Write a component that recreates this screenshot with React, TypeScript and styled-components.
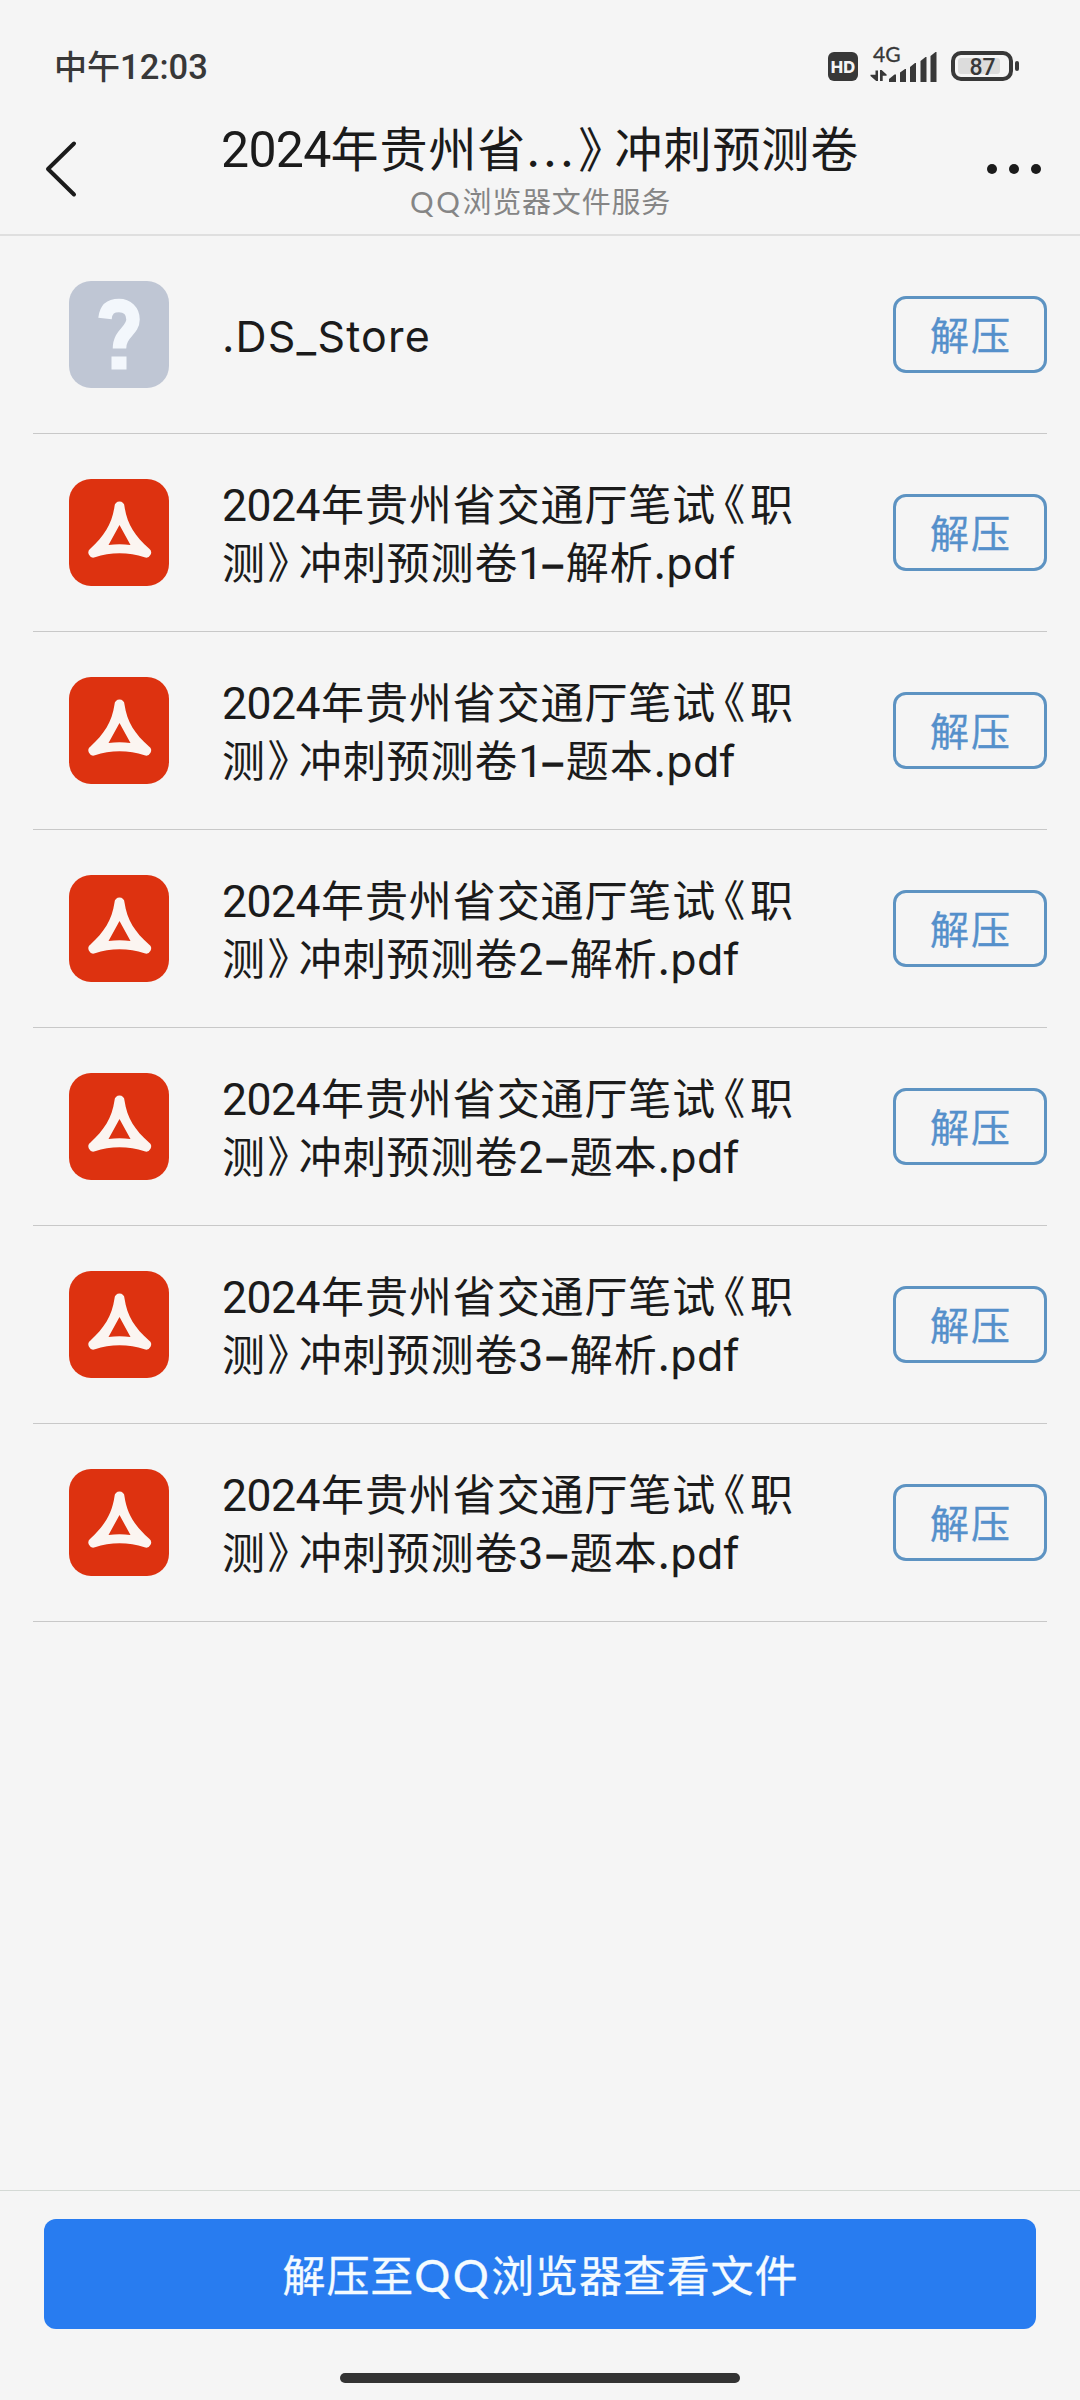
import React from "react";
import styled, { createGlobalStyle, css } from "styled-components";

const GlobalStyle = createGlobalStyle`
  html, body { margin: 0; padding: 0; background: #f5f5f5; }
  * { box-sizing: border-box; }
`;

const cjk = `"Noto Sans CJK SC", sans-serif`;

const Screen = styled.div`
  width: 1080px;
  height: 2400px;
  display: flex;
  flex-direction: column;
  background: #f5f5f5;
  color: #1b1b1b;
  font-family: ${cjk};
  overflow: hidden;
`;

const Run = styled.span<{ $face?: string; $size?: number; $gap?: number; $before?: number; $after?: number }>`
  line-height: 1;
  ${(p) => p.$face && css`font-family: ${p.$face}, ${cjk};`}
  ${(p) => p.$size && css`font-size: ${p.$size}px;`}
  ${(p) => p.$gap !== undefined && css`letter-spacing: ${p.$gap}px;`}
  margin-left: ${(p) => p.$before ?? 0}px;
  margin-right: ${(p) => p.$after ?? 0}px;
`;

/* Book-title brackets set at half width */
const Bracket = styled(Run)`
  font-feature-settings: "halt" 1;
`;

const Dash = styled(Run)`
  -webkit-text-stroke: 1.6px currentColor;
`;

const StatusBar = styled.div`
  height: 108px;
  padding: 0 61px 0 54px;
  display: flex;
  justify-content: space-between;
  flex: none;
`;

const Clock = styled.div`
  font-size: 33px;
  line-height: 48px;
  margin-top: 41px;
  font-weight: 500;
  letter-spacing: 0px;
  color: #383838;
  white-space: nowrap;
`;

const Header = styled.header`
  height: 128px;
  flex: none;
  display: flex;
  justify-content: space-between;
  border-bottom: 2px solid #dfdfdf;
`;

const Titles = styled.div`
  width: 640px;
  display: flex;
  flex-direction: column;
  white-space: nowrap;
`;

const Title = styled.h1`
  margin: 2px 0 0 1px;
  font-size: 48px;
  line-height: 72px;
  font-weight: 400;
  letter-spacing: 0.9px;
`;

const Subtitle = styled.div`
  margin-left: 190px;
  font-size: 29px;
  line-height: 36px;
  letter-spacing: 0.8px;
  color: #858585;
`;

const List = styled.ul`
  margin: 0;
  padding: 0 33px;
  list-style: none;
  flex: 1;
`;

const Row = styled.li`
  height: 198px;
  display: flex;
  align-items: center;
  border-bottom: 1px solid #c8c8c8;
`;

const Name = styled.div`
  flex: 1;
  margin-left: 53px;
  padding-bottom: 4px;
  font-size: 43px;
  line-height: 58px;
  letter-spacing: 0.9px;
  white-space: nowrap;
`;

const ExtractButton = styled.button`
  width: 154px;
  height: 77px;
  padding: 0 0 3px 2px;
  border: 3px solid #5d93c2;
  border-radius: 13px;
  background: transparent;
  color: #5590cb;
  font: 400 39px/60px ${cjk};
  letter-spacing: 2px;
  -webkit-text-stroke: 0.3px currentColor;
`;

const Footer = styled.footer`
  height: 210px;
  flex: none;
  display: flex;
  flex-direction: column;
  align-items: center;
  border-top: 1px solid #d4d9d5;
`;

const PrimaryButton = styled.button`
  width: 992px;
  height: 110px;
  margin-top: 28px;
  padding: 0 0 2px 1px;
  border: 0;
  border-radius: 12px;
  background: #287cf0;
  color: #f4fbff;
  font: 400 43px/64px ${cjk};
  letter-spacing: 0.9px;
  white-space: nowrap;
  -webkit-text-stroke: 0.3px currentColor;
`;

const HomeBar = styled.div`
  width: 400px;
  height: 10px;
  margin-top: 44px;
  border-radius: 5px;
  background: #333;
`;

const IconBox = styled.svg`
  display: block;
  flex: none;
`;

const FileIcon = styled(IconBox)`
  margin-left: 36px;
`;

function StatusIcons() {
  return (
    <IconBox width="200" height="108" viewBox="819 0 200 108">
      <rect x="828" y="52" width="30" height="29" rx="6" fill="#383838" />
      <text x="843" y="72.500" textAnchor="middle" fontFamily="Inter" fontWeight="800" fontSize="16.500" fill="#f5f5f5">HD</text>
      <text x="873" y="62" fontFamily="Lato" fontSize="21" fill="#383838" stroke="#383838" strokeWidth="0.3">4G</text>
      <g fill="#383838">
        <path d="M875.5 70.5h2.500V81h-1.800L870.500 76v-1.200h5zM880 70h1.600l5 4.600v1.200h-3.900V81H880z" />
        <path d="M889 82v-3l5.500-4.500H896V82h-7z" />
        <path d="M900 82v-9.500l5-3.500h1v13zM910 82V67l5-4h1v19zM920.500 82V61l5-4h1v25zM930.500 82V56l5-4h1v30z" />
      </g>
      <rect x="953" y="53" width="58" height="26" rx="8" fill="none" stroke="#383838" strokeWidth="4" />
      <rect x="958" y="58" width="42" height="16" rx="3" fill="#dcdcdc" />
      <text x="982.500" y="74.500" textAnchor="middle" fontFamily="Roboto" fontWeight="500" fontSize="23" fill="#383838">87</text>
      <rect x="1015" y="61" width="4" height="10" rx="2" fill="#383838" />
    </IconBox>
  );
}

function BackIcon() {
  return (
    <IconBox width="120" height="126" viewBox="0 108 120 126">
      <path d="M74 143.500 48 169 74 194.500" fill="none" stroke="#1b1b1b" strokeWidth="4" strokeLinecap="round" strokeLinejoin="round" />
    </IconBox>
  );
}

function MoreIcon() {
  return (
    <IconBox width="120" height="126" viewBox="960 108 120 126">
      <circle cx="992" cy="169" r="5" fill="#1b1b1b" />
      <circle cx="1014" cy="169" r="5" fill="#1b1b1b" />
      <circle cx="1036" cy="169" r="5" fill="#1b1b1b" />
    </IconBox>
  );
}

function UnknownIcon() {
  return (
    <FileIcon width="100" height="107" viewBox="0 0 100 107">
      <rect width="100" height="107" rx="22" fill="#bfc6d4" />
      <path d="M36 37.500C37 28 42 24.500 50 24.500S64 30 64 38.500C64 50 50.500 52 50.500 67.500" fill="none" stroke="#f3f7fc" strokeWidth="13.5" />
      <rect x="42.500" y="75.500" width="15" height="13" fill="#f3f7fc" />
    </FileIcon>
  );
}

function PdfIcon() {
  return (
    <FileIcon width="100" height="107" viewBox="0 0 100 107">
      <rect width="100" height="107" rx="22" fill="#dd3210" />
      <path
        d="M45.500 27.500a5 5 0 0 1 10 0C58 45 66 57 80 69.500a5 5 0 0 1-4.500 8.800C60 73 41 73 26 78.300a5 5 0 0 1-4.500-8.800C35 57 43 45 45.500 27.500ZM50.500 46 39.500 66Q50.500 64.500 61.500 66Z"
        fill="#fbf5f1"
        fillRule="evenodd"
      />
    </FileIcon>
  );
}

function PdfName({ paper, kind }: { paper: number; kind: string }) {
  return (
    <Name>
      <Run $face="Roboto" $size={44.5} $gap={-0.5}>2024</Run>
      <Run $before={1}>年贵州省交通厅笔试</Run>
      <Bracket $before={7.5} $after={4}>《</Bracket>
      <Run>职</Run>
      <br />
      <Run>测</Run>
      <Bracket $before={1.5} $after={9}>》</Bracket>
      <Run>冲刺预测卷</Run>
      <Run $face="Roboto" $size={44.5} $gap={paper === 1 ? -2 : 2}>{paper}</Run>
      <Dash $after={0.5}>–</Dash>
      <Run>{kind}</Run>
      <Run $face="Inter" $size={43} $gap={0.3}>.pdf</Run>
    </Name>
  );
}

const files = [
  { paper: 1, kind: "解析" },
  { paper: 1, kind: "题本" },
  { paper: 2, kind: "解析" },
  { paper: 2, kind: "题本" },
  { paper: 3, kind: "解析" },
  { paper: 3, kind: "题本" },
];

export default function App() {
  return (
    <>
      <GlobalStyle />
      <Screen>
        <StatusBar>
          <Clock>
            中午<Run $face="Roboto" $size={34.5} $gap={0.1}>12:03</Run>
          </Clock>
          <StatusIcons />
        </StatusBar>
        <Header>
          <BackIcon />
          <Titles>
            <Title>
              <Run $face="Roboto" $size={50} $gap={-0.7}>2024</Run>
              <Run>年贵州省</Run>
              <Run $face="Inter" $gap={3}>...</Run>
              <Bracket $before={1.5} $after={11.5}>》</Bracket>
              <Run>冲刺预测卷</Run>
            </Title>
            <Subtitle>
              <Run $face="Lato" $size={29.5} $gap={2.6}>QQ</Run>浏览器文件服务
            </Subtitle>
          </Titles>
          <MoreIcon />
        </Header>
        <List>
          <Row>
            <UnknownIcon />
            <Name>
              <Run $face="Inter" $size={43} $gap={1.2}>.DS_Store</Run>
            </Name>
            <ExtractButton>解压</ExtractButton>
          </Row>
          {files.map((f) => (
            <Row key={`${f.paper}${f.kind}`}>
              <PdfIcon />
              <PdfName {...f} />
              <ExtractButton>解压</ExtractButton>
            </Row>
          ))}
        </List>
        <Footer>
          <PrimaryButton>
            解压至<Run $face="Lato" $size={45} $gap={2.4}>QQ</Run>浏览器查看文件
          </PrimaryButton>
          <HomeBar />
        </Footer>
      </Screen>
    </>
  );
}
